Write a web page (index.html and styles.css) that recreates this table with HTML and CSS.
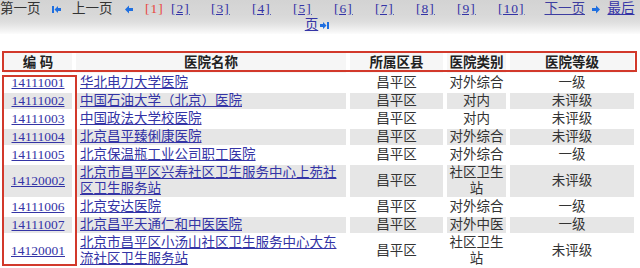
FILE: index.html
```html
<!DOCTYPE html>
<html lang="zh">
<head>
<meta charset="utf-8">
<title>医院列表</title>
<link rel="stylesheet" href="styles.css">
</head>
<body>
<div class="pager">
  <div class="pager-line">
    <span class="txt">第一页</span>
    <svg class="ico ico-first" width="9" height="9" viewBox="0 0 9 9"><rect x="0" y="1" width="2" height="7"/><path d="M2.5 4.5 L6 1 L6 3 L9 3 L9 6 L6 6 L6 8 Z"/></svg>
    <span class="txt txt-prev">上一页</span>
    <svg class="ico ico-prev" width="8" height="9" viewBox="0 0 8 9"><path d="M0 4.5 L4 0.5 L4 3 L8 3 L8 6 L4 6 L4 8.5 Z"/></svg>
    <span class="pg cur">[1]</span>
    <a class="pg pg2" href="#">[2]</a>
    <a class="pg pg3" href="#">[3]</a>
    <a class="pg pgn" href="#">[4]</a>
    <a class="pg pgn" href="#">[5]</a>
    <a class="pg pgn" href="#">[6]</a>
    <a class="pg pgn" href="#">[7]</a>
    <a class="pg pgn" href="#">[8]</a>
    <a class="pg pgn" href="#">[9]</a>
    <a class="pg pgn" href="#">[10]</a>
    <a class="nav nav-next" href="#">下一页</a>
    <svg class="ico ico-next" width="8" height="9" viewBox="0 0 8 9"><path d="M8 4.5 L4 0.5 L4 3 L0 3 L0 6 L4 6 L4 8.5 Z"/></svg>
    <a class="nav nav-last" href="#">最后</a>
  </div>
  <div class="pager-line2">
    <a class="nav" href="#">页</a>
    <svg class="ico ico-last" width="9" height="9" viewBox="0 0 9 9"><path d="M6.5 4.5 L3 1 L3 3 L0 3 L0 6 L3 6 L3 8 Z"/><rect x="7" y="1" width="2" height="7"/></svg>
  </div>
</div>

<div class="tablewrap">
  <table class="grid">
    <colgroup>
      <col class="c1"><col class="c2"><col class="c3"><col class="c4"><col class="c5">
    </colgroup>
    <thead>
      <tr><th>编 码</th><th>医院名称</th><th>所属区县</th><th>医院类别</th><th>医院等级</th></tr>
    </thead>
    <tbody>
      <tr class="odd"><td class="code"><a href="#">14111001</a></td><td class="name"><a href="#">华北电力大学医院</a></td><td>昌平区</td><td>对外综合</td><td>一级</td></tr>
      <tr class="even"><td class="code"><a href="#">14111002</a></td><td class="name"><a href="#">中国石油大学（北京）医院</a></td><td>昌平区</td><td>对内</td><td>未评级</td></tr>
      <tr class="odd"><td class="code"><a href="#">14111003</a></td><td class="name"><a href="#">中国政法大学校医院</a></td><td>昌平区</td><td>对内</td><td>未评级</td></tr>
      <tr class="even"><td class="code"><a href="#">14111004</a></td><td class="name"><a href="#">北京昌平臻俐康医院</a></td><td>昌平区</td><td>对外综合</td><td>未评级</td></tr>
      <tr class="odd"><td class="code"><a href="#">14111005</a></td><td class="name"><a href="#">北京保温瓶工业公司职工医院</a></td><td>昌平区</td><td>对外综合</td><td>一级</td></tr>
      <tr class="even"><td class="code"><a href="#">14120002</a></td><td class="name"><a href="#">北京市昌平区兴寿社区卫生服务中心上苑社区卫生服务站</a></td><td>昌平区</td><td>社区卫生站</td><td>未评级</td></tr>
      <tr class="odd"><td class="code"><a href="#">14111006</a></td><td class="name"><a href="#">北京安达医院</a></td><td>昌平区</td><td>对外综合</td><td>一级</td></tr>
      <tr class="even"><td class="code"><a href="#">14111007</a></td><td class="name"><a href="#">北京昌平天通仁和中医医院</a></td><td>昌平区</td><td>对外中医</td><td>一级</td></tr>
      <tr class="odd"><td class="code"><a href="#">14120001</a></td><td class="name"><a href="#">北京市昌平区小汤山社区卫生服务中心大东流社区卫生服务站</a></td><td>昌平区</td><td>社区卫生站</td><td>未评级</td></tr>
    </tbody>
  </table>
  <div class="mark mark-head"></div>
  <div class="mark mark-code"></div>
</div>
</body>
</html>
```

FILE: styles.css
```css
html, body {
  margin: 0;
  padding: 0;
  overflow: hidden;
  background: #ffffff;
}
body {
  font-family: "Liberation Serif", "Noto Sans CJK SC", serif;
  font-size: 13.5px;
  color: #2a2a2a;
}
a {
  color: #3434a6;
  text-decoration: underline;
}

/* pager */
.pager {
  height: 34px;
  padding-top: 1px;
  box-sizing: border-box;
  background: linear-gradient(to bottom, #d3d3d3 0px, #d8d8d8 15px, #dedede 22px, #ececec 28px, #fcfcfc 34px);
  line-height: 16px;
}
.pager-line {
  display: flex;
  align-items: center;
  white-space: nowrap;
  height: 16px;
}
.txt { color: #333333; }
.ico { fill: #1f6fe0; flex: none; }
.ico-first { margin-left: 11.5px; }
.txt-prev { margin-left: 11px; }
.ico-prev { margin-left: 12.5px; }
.pg { letter-spacing: 1px; }
.cur { color: #e8463c; margin-left: 12px; }
.pg2 { margin-left: 7.25px; }
.pg3 { margin-left: 21.25px; }
.pgn { margin-left: 22.25px; }
.nav-next { margin-left: 20px; color: #3d3da0; }
.ico-next { margin-left: 6.5px; }
.nav-last { margin-left: 8px; }
.pager-line2 {
  display: flex;
  align-items: center;
  justify-content: center;
  gap: 2px;
  height: 16px;
  padding-right: 6px;
}

/* table */
.tablewrap {
  position: relative;
  margin-top: 17px;
}
.grid {
  border-collapse: separate;
  border-spacing: 4px 2px;
  table-layout: fixed;
  width: 638px;
  margin: 0;
}
.c1 { width: 68px; }
.c2 { width: 270px; }
.c3 { width: 93px; }
.c4 { width: 59px; }
.c5 { width: 124px; }
.grid th {
  height: 20px;
  padding: 0;
  line-height: 20px;
  font-weight: bold;
  color: #222222;
  background: #f6f6f6;
  text-align: center;
  white-space: pre;
}
.grid td {
  padding: 0;
  line-height: 16px;
  text-align: center;
  color: #333333;
  vertical-align: middle;
}
.grid td.name {
  text-align: left;
  padding-left: 4px;
}
.grid tr.even td { background: #e6e6e6; }
.grid tr.odd td { background: #ffffff; }

/* red annotation boxes over the table */
.mark {
  position: absolute;
  border: 2px solid #d2392b;
  box-sizing: border-box;
  pointer-events: none;
}
.mark-head {
  left: 2px;
  top: 0px;
  width: 635px;
  height: 21px;
}
.mark-code {
  left: 2px;
  top: 24px;
  width: 75px;
  height: 191px;
}
```
